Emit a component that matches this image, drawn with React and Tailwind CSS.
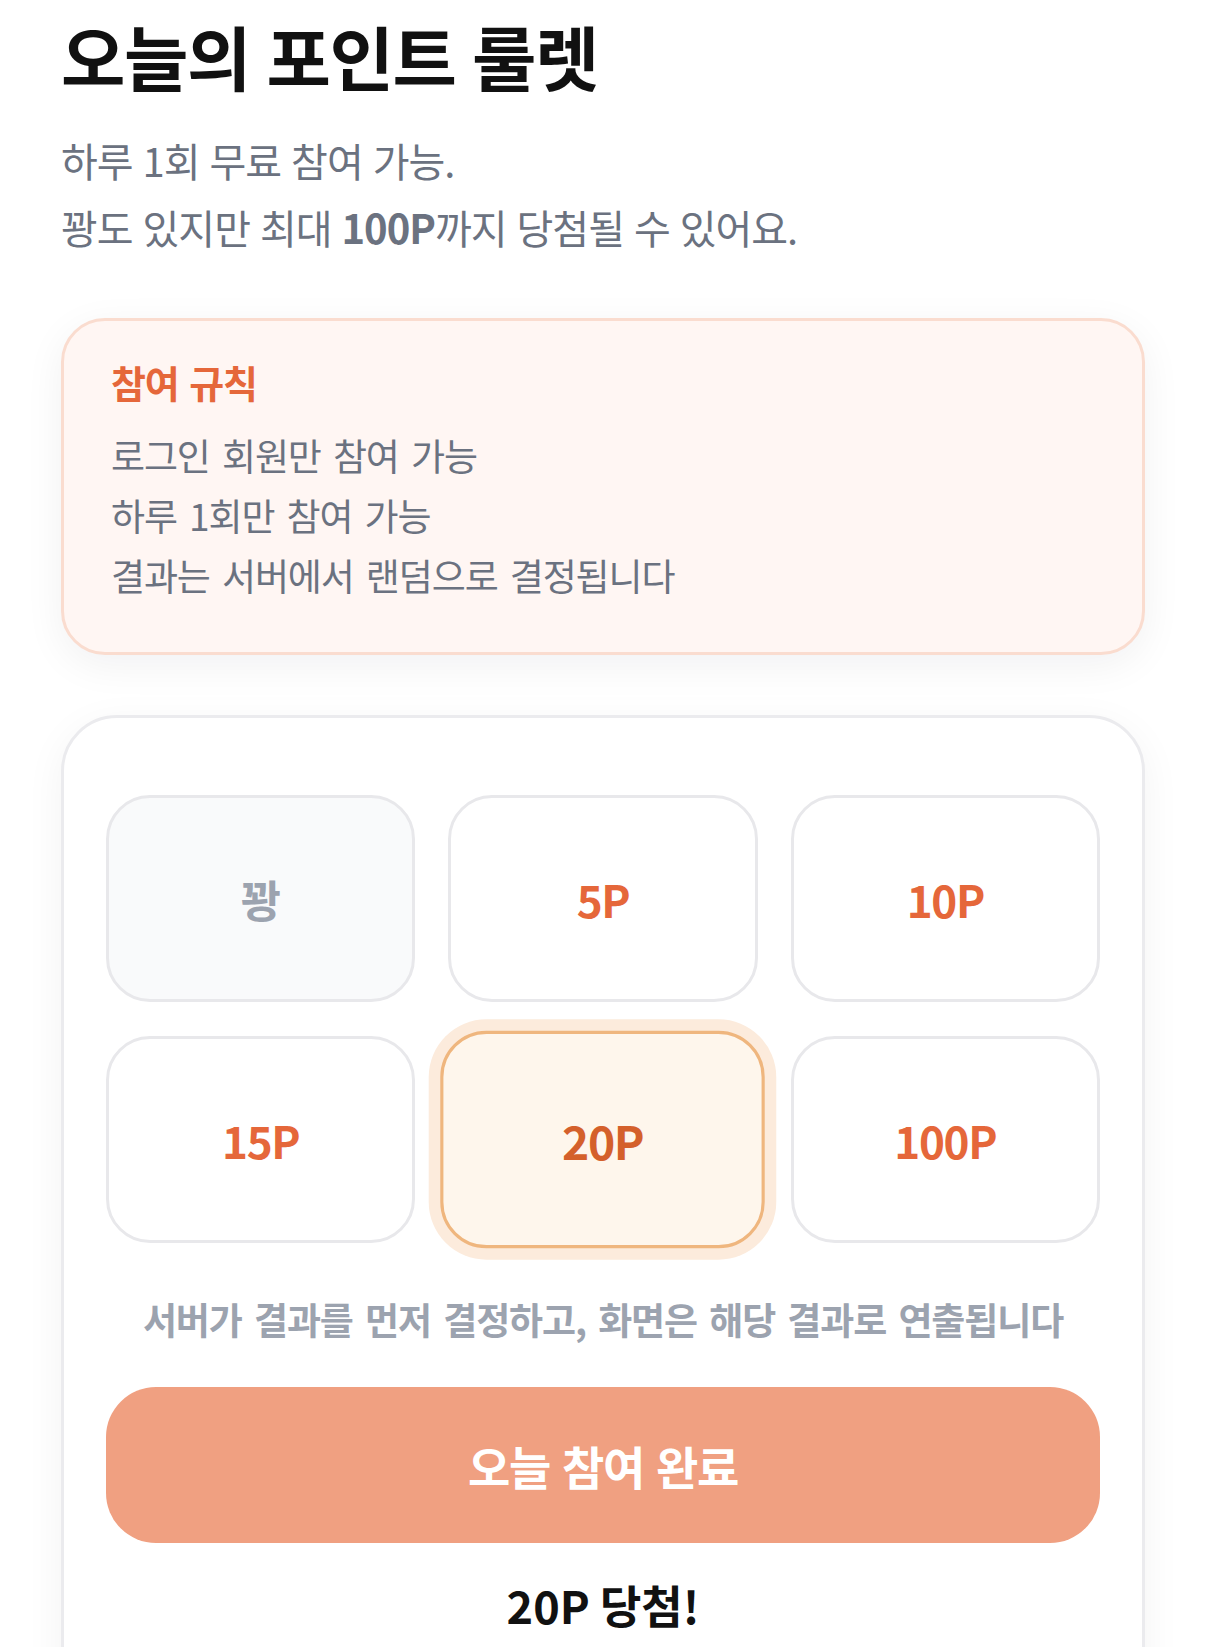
import React from "react";

const prizes = [
  { label: "꽝", type: "miss" },
  { label: "5P", type: "point" },
  { label: "10P", type: "point" },
  { label: "15P", type: "point" },
  { label: "20P", type: "win" },
  { label: "100P", type: "point" },
];

const rules = ["로그인 회원만 참여 가능", "하루 1회만 참여 가능", "결과는 서버에서 랜덤으로 결정됩니다"];

const PrizeCell = ({ label, type }) => {
  if (type === "win") {
    return (
      <div className="h-[207px] flex items-center justify-center rounded-[44px] border-[3px] border-[#efb67e] bg-[#fef6ec] ring-[11px] ring-[#fcebdc] scale-[1.05] text-[44px] font-bold tracking-[-0.03em] text-[#d4602b]">
        {label}
      </div>
    );
  }
  if (type === "miss") {
    return (
      <div className="h-[207px] flex items-center justify-center rounded-[44px] border-[3px] border-[#e8e8eb] bg-[#f9fafb] text-[44px] font-bold text-[#9ca3af]">
        {label}
      </div>
    );
  }
  return (
    <div className="h-[207px] flex items-center justify-center rounded-[44px] border-[3px] border-[#e8e8eb] bg-white text-[44px] font-bold tracking-[-0.03em] text-[#e5673a]">
      {label}
    </div>
  );
};

const App = () => {
  return (
    <div className="h-screen overflow-hidden bg-white px-[61px] pt-[16px] font-['Noto_Sans_CJK_KR',sans-serif]">
      <h1 className="text-[70px] leading-[80px] font-bold tracking-[-0.02em] text-[#111111] [word-spacing:2px]">
        오늘의 포인트 룰렛
      </h1>
      <p className="mt-[31px] text-[40px] leading-[67px] tracking-[-0.025em] text-[#6b7280] [word-spacing:2px]">
        하루 1회 무료 참여 가능.
        <br />
        꽝도 있지만 최대 <span className="font-bold">100P</span>까지 당첨될 수 있어요.
      </p>

      <section className="mt-[57px] rounded-[44px] border-[3px] border-[#fadccf] bg-[#fff6f3] px-[47px] pt-[37px] pb-[47px] shadow-[0_10px_40px_rgba(15,23,42,0.06)]">
        <h2 className="text-[38px] leading-[48px] font-bold tracking-[-0.03em] text-[#e5673a] [word-spacing:3px]">
          참여 규칙
        </h2>
        <ul className="mt-[19px]">
          {rules.map((r) => (
            <li
              key={r}
              className="text-[37px] leading-[60px] tracking-[-0.03em] text-[#6b7280] [word-spacing:5px]"
            >
              {r}
            </li>
          ))}
        </ul>
      </section>

      <section className="mt-[60px] rounded-[56px] border-[3px] border-[#ebebee] bg-white px-[42px] pt-[77px] pb-[80px] shadow-[0_10px_40px_rgba(15,23,42,0.05)]">
        <div className="grid grid-cols-3 gap-x-[33px] gap-y-[34px]">
          {prizes.map((p) => (
            <PrizeCell key={p.label} label={p.label} type={p.type} />
          ))}
        </div>
        <p className="mt-[52px] text-center text-[37px] leading-[48px] font-bold tracking-[-0.03em] text-[#9ca3af] [word-spacing:5px]">
          서버가 결과를 먼저 결정하고, 화면은 해당 결과로 연출됩니다
        </p>
        <button
          disabled
          className="mt-[44px] flex h-[156px] w-full items-center justify-center rounded-[50px] bg-[#f0a081] text-[46px] font-bold tracking-[-0.03em] text-white [word-spacing:3px]"
        >
          오늘 참여 완료
        </button>
        <p className="mt-[32px] text-center text-[45px] leading-[60px] font-bold text-[#111111]">
          20P 당첨!
        </p>
      </section>
    </div>
  );
};

export default App;
